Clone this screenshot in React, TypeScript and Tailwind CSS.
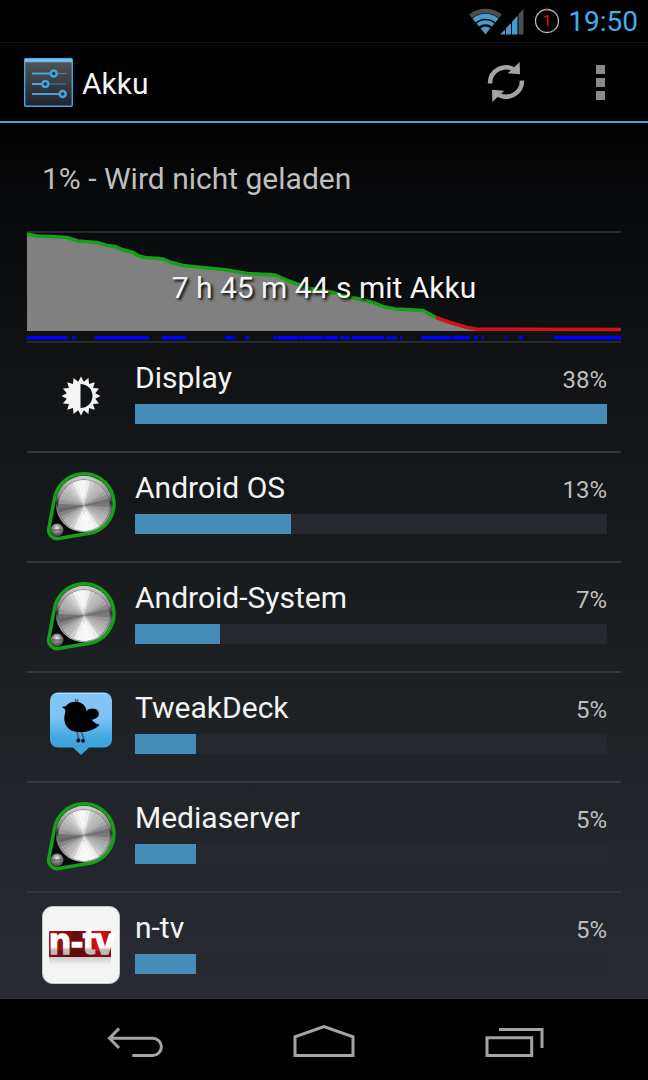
import type { ReactNode } from 'react';

const BATTERY_LINE =
  '0,3 10,5 23,5.5 40,6.5 51,10 70,11.5 80,14.5 88,15.5 95,18.5 106,21.5 112,25 118,26.5 136,28 143,31 156,34.5 175,36.5 200,39 220,42.5 248,44 263,50.5 283,57.5 301,60.5 306,61.5 313,64 330,67.5 346,71.5 356,75.5 368,78 396,79.5 409,86.5';
const BATTERY_LOW = '409,86.5 423,91.5 440,96.5 450,98.2 594,98.5';

// [start, end] of every stretch in which the screen was on
const AWAKE = [
  [0, 41], [45, 49], [68, 122], [135, 159], [198, 207], [208, 209], [218, 222],
  [246, 249], [250, 271], [272, 296], [297, 311], [313, 318], [319, 323],
  [325, 357], [359, 363], [364, 370], [373, 375], [394, 424], [425, 443],
  [447, 451], [455, 457], [478, 479], [480, 481], [492, 496], [527, 594],
];

const KNOB_SHADES = [
  246, 236, 206, 192, 186, 178, 164, 140, 112, 122, 150, 166, 176, 186, 202, 236, 246, 248,
  248, 246, 238, 206, 188, 178, 160, 134, 104, 116, 150, 168, 178, 188, 200, 216, 238, 246,
];

function polar(cx: number, cy: number, r: number, deg: number) {
  const a = ((deg - 90) * Math.PI) / 180;
  return `${(cx + r * Math.cos(a)).toFixed(2)} ${(cy + r * Math.sin(a)).toFixed(2)}`;
}

function DisplayIcon() {
  const teeth = Array.from({ length: 32 }, (_, i) =>
    polar(39, 40, i % 2 === 0 ? 19.5 : 14.5, i * 11.25)
  ).join(' L');

  return (
    <svg viewBox="0 0 78 78" className="size-[78px] shrink-0" aria-hidden="true">
      <path d={`M${teeth}Z`} fill="#f4f4f4" />
      <path d="M38.500 28A12 12 0 0 1 38.500 52Z" fill="#101316" />
    </svg>
  );
}

function KnobIcon() {
  return (
    <svg viewBox="0 0 78 78" className="size-[78px] shrink-0" aria-hidden="true">
      <defs>
        <linearGradient id="knobRim" x1="0" y1="0" x2="0" y2="1">
          <stop offset="0" stopColor="#d0d0d0" />
          <stop offset="0.35" stopColor="#8a8a8a" />
          <stop offset="0.48" stopColor="#2e2e2e" />
          <stop offset="0.6" stopColor="#7a7a7a" />
          <stop offset="1" stopColor="#c8c8c8" />
        </linearGradient>
        <radialGradient id="knobScrew" cx="0.5" cy="0.35" r="0.6">
          <stop offset="0" stopColor="#f2f2f2" />
          <stop offset="0.5" stopColor="#8a8a8a" />
          <stop offset="1" stopColor="#4a4a4a" />
        </radialGradient>
      </defs>
      <path
        d="M47.200 67.300A30 30 0 1 0 12.400 32.700L6.800 62.500A8.500 8.500 0 0 0 16.500 72.500Z"
        fill="#08090a"
        stroke="#17a017"
        strokeWidth="3.5"
      />
      <circle cx="42" cy="38" r="28.200" fill="url(#knobRim)" />
      <circle cx="42" cy="39.500" r="26" fill="#6a6a6a" />
      {KNOB_SHADES.map((shade, i) => (
        <path
          key={i}
          d={`M42 39.5L${polar(42, 39.5, 25.5, i * 10 - 6)}A25.5 25.5 0 0 1 ${polar(42, 39.5, 25.5, i * 10 + 6)}Z`}
          fill={`rgb(${shade},${shade},${shade})`}
        />
      ))}
      <circle cx="15" cy="64" r="6.500" fill="url(#knobScrew)" />
      <path d="M10 64h10" stroke="#555" strokeWidth="1" />
    </svg>
  );
}

function TweakDeckIcon() {
  return (
    <svg viewBox="0 0 78 78" className="size-[78px] shrink-0" aria-hidden="true">
      <defs>
        <linearGradient id="deck" x1="0" y1="0" x2="0" y2="1">
          <stop offset="0" stopColor="#84c6f6" />
          <stop offset="0.4" stopColor="#7cc3f4" />
          <stop offset="0.75" stopColor="#3fa6e0" />
          <stop offset="1" stopColor="#3aa0da" />
        </linearGradient>
      </defs>
      <path
        d="M16 6.500H62a8 8 0 0 1 8 8V53.500a8 8 0 0 1-8 8H47L39 69L31 61.500H16a8 8 0 0 1-8-8V14.500a8 8 0 0 1 8-8Z"
        fill="url(#deck)"
      />
      <path d="M14 7.500H64" stroke="#b9e0fb" strokeWidth="1" />
      <path
        d="M20 21L24 20C26 17 30 15.500 34 15.800C40 16 44 20 44.500 25C46 22.500 51 21.500 54.500 23.500C58 26 57.500 31 53.500 32.500C52 33.500 50.500 33.500 49.500 33.500C52 36.500 54 38 57.500 38.800C54 43 46 46.300 38 46.300C29 46.300 22.500 41 22.300 33C22.200 29.500 23.500 27 23.300 23.500Z"
        fill="#000"
      />
      <path d="M34 16L33 13M35 16L36 13" stroke="#25566f" strokeWidth="1.200" />
      <path d="M35 46L37 54M39.500 46L42 54" stroke="#3d4f5a" strokeWidth="1.300" fill="none" />
      <circle cx="36.300" cy="54.500" r="1.900" />
      <circle cx="41" cy="54.800" r="1.900" />
    </svg>
  );
}

function NtvIcon() {
  return (
    <svg viewBox="0 0 78 78" className="size-[78px] shrink-0" aria-hidden="true">
      <defs>
        <linearGradient id="ntvRed" x1="0" y1="0" x2="1" y2="0">
          <stop offset="0" stopColor="#c01216" />
          <stop offset="0.45" stopColor="#5e0b0e" />
          <stop offset="0.8" stopColor="#e01014" />
          <stop offset="1" stopColor="#a80d10" />
        </linearGradient>
        <linearGradient id="ntvText" gradientUnits="userSpaceOnUse" x1="0" y1="20" x2="0" y2="48">
          <stop offset="0.75" stopColor="#fff" />
          <stop offset="0.85" stopColor="#bdbdbd" />
        </linearGradient>
        <linearGradient id="ntvShade" x1="0" y1="0" x2="0" y2="1">
          <stop offset="0" stopColor="#c9c9c9" />
          <stop offset="1" stopColor="#f4f4f4" />
        </linearGradient>
      </defs>
      <rect x="0.500" y="0.500" width="77" height="77" rx="10" fill="#f4f4f4" stroke="#c8c8c8" />
      <rect x="7" y="51" width="62" height="8" fill="url(#ntvShade)" />
      <rect x="7" y="25" width="62" height="26" rx="1" fill="url(#ntvRed)" />
      <rect x="7" y="45" width="62" height="6" fill="#5a0a0c" opacity="0.6" />
      <text
        x="7"
        y="48"
        fontSize="36"
        fontWeight="700"
        fontFamily="Liberation Sans, sans-serif"
        fill="url(#ntvText)"
        stroke="url(#ntvText)"
        strokeWidth="1.500"
      >
        n-tv
      </text>
    </svg>
  );
}

function StatusBar() {
  return (
    <div className="flex h-[43px] items-center justify-end border-b border-[#141414] bg-black pr-2.5">
      <svg viewBox="0 0 55 27" className="mr-2.5 h-[27px] w-[55px]" aria-label="WLAN und Mobilfunk">
        <g fill="none">
          <path d="M1.500 8.300A23.500 23.500 0 0 1 31.500 8.300" stroke="#4b4f52" strokeWidth="4.500" />
          <path d="M5 12.500A18 18 0 0 1 28 12.500" stroke="#4a9bcb" strokeWidth="5" />
          <path d="M8.800 17A12 12 0 0 1 24.200 17" stroke="#4a9bcb" strokeWidth="4" />
        </g>
        <path d="M11.600 20.200A7.600 7.600 0 0 1 21.400 20.200L16.500 26.500Z" fill="#4a9bcb" />
        <path d="M49.500 6L54.500 1V26.500H49.500Z" fill="#4b4f52" />
        <path d="M31 26.500L36 21.500V26.500ZM37 20.500L42 15V26.500H37ZM43 14L48.500 7.500V26.500H43Z" fill="#4a9bcb" />
      </svg>
      <svg viewBox="0 0 26 28" className="mr-2 h-7 w-[26px]" aria-label="Akku 1 Prozent">
        <circle cx="13" cy="14" r="11.500" fill="none" stroke="#bcbcbc" strokeWidth="1.300" />
        <path d="M13 0.500V4" stroke="#e01010" strokeWidth="1.500" />
        <text x="13" y="19" fontSize="15" textAnchor="middle" fill="#f01010">
          1
        </text>
      </svg>
      <time className="pt-0.5 text-[28px] leading-8 text-[#3fb0ec]">19:50</time>
    </div>
  );
}

function ActionBar() {
  return (
    <header className="flex h-20 items-center border-b-2 border-[#3fabe6] bg-black pr-[43px] pl-6 text-[#f4f4f4]">
      <svg viewBox="0 0 49 49" className="size-[49px]" aria-hidden="true">
        <defs>
          <linearGradient id="settingsBg" x1="0" y1="0" x2="0" y2="1">
            <stop offset="0" stopColor="#55585a" />
            <stop offset="1" stopColor="#20232b" />
          </linearGradient>
        </defs>
        <rect x="0.700" y="0.700" width="47.600" height="47.600" rx="1" fill="url(#settingsBg)" stroke="#4aa3dc" strokeWidth="1.400" />
        <path d="M1 2.500H48" stroke="#6cc0f2" strokeWidth="3.500" />
        <g stroke="#3f86b4" strokeWidth="1">
          <path d="M8 15.500H42M8 26H42" />
        </g>
        <g stroke="#42a5e0" strokeWidth="2.200">
          <path d="M8 15.500H27M8 26H18M8 36H36" />
        </g>
        <g fill="#263038" stroke="#42a5e0" strokeWidth="2.500">
          <circle cx="29.700" cy="15.500" r="3" />
          <circle cx="21.300" cy="26" r="3" />
          <circle cx="38.700" cy="36" r="3" />
        </g>
      </svg>
      <h1 className="ml-[9px] flex-1 pt-1 text-[30px] leading-9">Akku</h1>
      <button aria-label="Aktualisieren" className="mr-[70px]">
        <svg viewBox="0 0 40 40" className="size-10" aria-hidden="true">
          <g fill="none" stroke="#a4a5a1" strokeWidth="4.500">
            <path d="M4 21.500A16 16 0 0 1 29.500 8.500" />
            <path d="M36 18.500A16 16 0 0 1 10.500 31.500" />
          </g>
          <path d="M33.700 0L34 12.300L21.700 11.300ZM6.300 40L6 27.700L18.300 28.700Z" fill="#a4a5a1" />
        </svg>
      </button>
      <button aria-label="Weitere Optionen" className="flex flex-col gap-1">
        <span className="size-[9px] bg-[#8a8a8a]" />
        <span className="size-[9px] bg-[#8a8a8a]" />
        <span className="size-[9px] bg-[#8a8a8a]" />
      </button>
    </header>
  );
}

function BatteryChart() {
  return (
    <div className="relative border-y-2 border-[#25282c]">
      <svg viewBox="0 2 594 108" preserveAspectRatio="none" className="block h-[108px] w-full overflow-visible" aria-hidden="true">
        <polygon points={`0,100 ${BATTERY_LINE} 423,91.5 440,96.5 450,98.5 450,100`} fill="#808080" />
        <g fill="none" strokeWidth="3.500">
          <polyline points={BATTERY_LINE} stroke="#17a017" />
          <polyline points={BATTERY_LOW} stroke="#d01414" />
        </g>
        {AWAKE.map(([from, to]) => (
          <rect key={from} x={from} y="105" width={to - from} height="3.500" fill="#0000ff" />
        ))}
      </svg>
      <p className="absolute inset-x-0 top-[37px] text-center text-[30px] leading-9 text-[#f4f4f4] [text-shadow:2px_2px_3px_#000]">
        7 h 45 m 44 s mit Akku
      </p>
    </div>
  );
}

interface Consumer {
  name: string;
  percent: number;
  level: number;
  icon: ReactNode;
}

const CONSUMERS: Consumer[] = [
  { name: 'Display', percent: 38, level: 100, icon: <DisplayIcon /> },
  { name: 'Android OS', percent: 13, level: 33, icon: <KnobIcon /> },
  { name: 'Android-System', percent: 7, level: 18, icon: <KnobIcon /> },
  { name: 'TweakDeck', percent: 5, level: 13, icon: <TweakDeckIcon /> },
  { name: 'Mediaserver', percent: 5, level: 13, icon: <KnobIcon /> },
  { name: 'n-tv', percent: 5, level: 13, icon: <NtvIcon /> },
];

function ConsumerRow({ name, percent, level, icon }: Consumer) {
  return (
    <li className="flex h-[110px] gap-[15px] border-b-2 border-[#34383c] pt-[13px] pr-[14px] pl-[15px] last:border-b-0">
      {icon}
      <div className="flex-1 pt-1">
        <div className="flex items-baseline justify-between">
          <span className="text-[30px] leading-9 text-[#f4f4f4]">{name}</span>
          <span className="text-2xl leading-9 text-[#bfbfbf]">{percent}%</span>
        </div>
        <div className="mt-1.5 h-5 bg-[#25282e]">
          <div className="h-full bg-[#468cb9]" style={{ width: `${level}%` }} />
        </div>
      </div>
    </li>
  );
}

function NavBar() {
  return (
    <nav className="flex h-[81px] shrink-0 bg-black px-10">
      <button aria-label="Zurück" className="flex flex-1 items-center justify-center">
        <svg viewBox="0 0 64 40" className="h-10 w-16" fill="none" stroke="#a4a5a1" strokeWidth="3" aria-hidden="true">
          <path d="M16 8.500L6.500 18.200L16 28M6.500 18.200H49.700A8.650 8.650 0 0 1 49.700 35.500H29.300" />
        </svg>
      </button>
      <button aria-label="Startseite" className="flex flex-1 items-center justify-center">
        <svg viewBox="0 0 64 40" className="h-10 w-16" fill="none" stroke="#a4a5a1" strokeWidth="3" aria-hidden="true">
          <path d="M3 35.500V16.800L32 6.500L61 16.800V35.500Z" />
        </svg>
      </button>
      <button aria-label="Letzte Apps" className="flex flex-1 items-center justify-center">
        <svg viewBox="0 0 64 40" className="h-10 w-16" fill="none" stroke="#a4a5a1" strokeWidth="3" aria-hidden="true">
          <path d="M6 17.800H50.700V35.500H6ZM18 9.500H61V28" />
        </svg>
      </button>
    </nav>
  );
}

export default function App() {
  return (
    <div className="flex h-screen flex-col bg-black font-[Roboto,sans-serif]">
      <StatusBar />
      <ActionBar />
      <main className="min-h-0 flex-1 overflow-hidden bg-[linear-gradient(#010101,#090a0c_10%,#101214_27%,#1d2124_66%,#282b33)] px-[27px]">
        <p className="pt-[38px] pb-[34px] pl-[15px] text-[30px] leading-9 text-[#bfbfbf]">
          1% - Wird nicht geladen
        </p>
        <BatteryChart />
        <ul>
          {CONSUMERS.map((consumer) => (
            <ConsumerRow key={consumer.name} {...consumer} />
          ))}
        </ul>
      </main>
      <NavBar />
    </div>
  );
}
